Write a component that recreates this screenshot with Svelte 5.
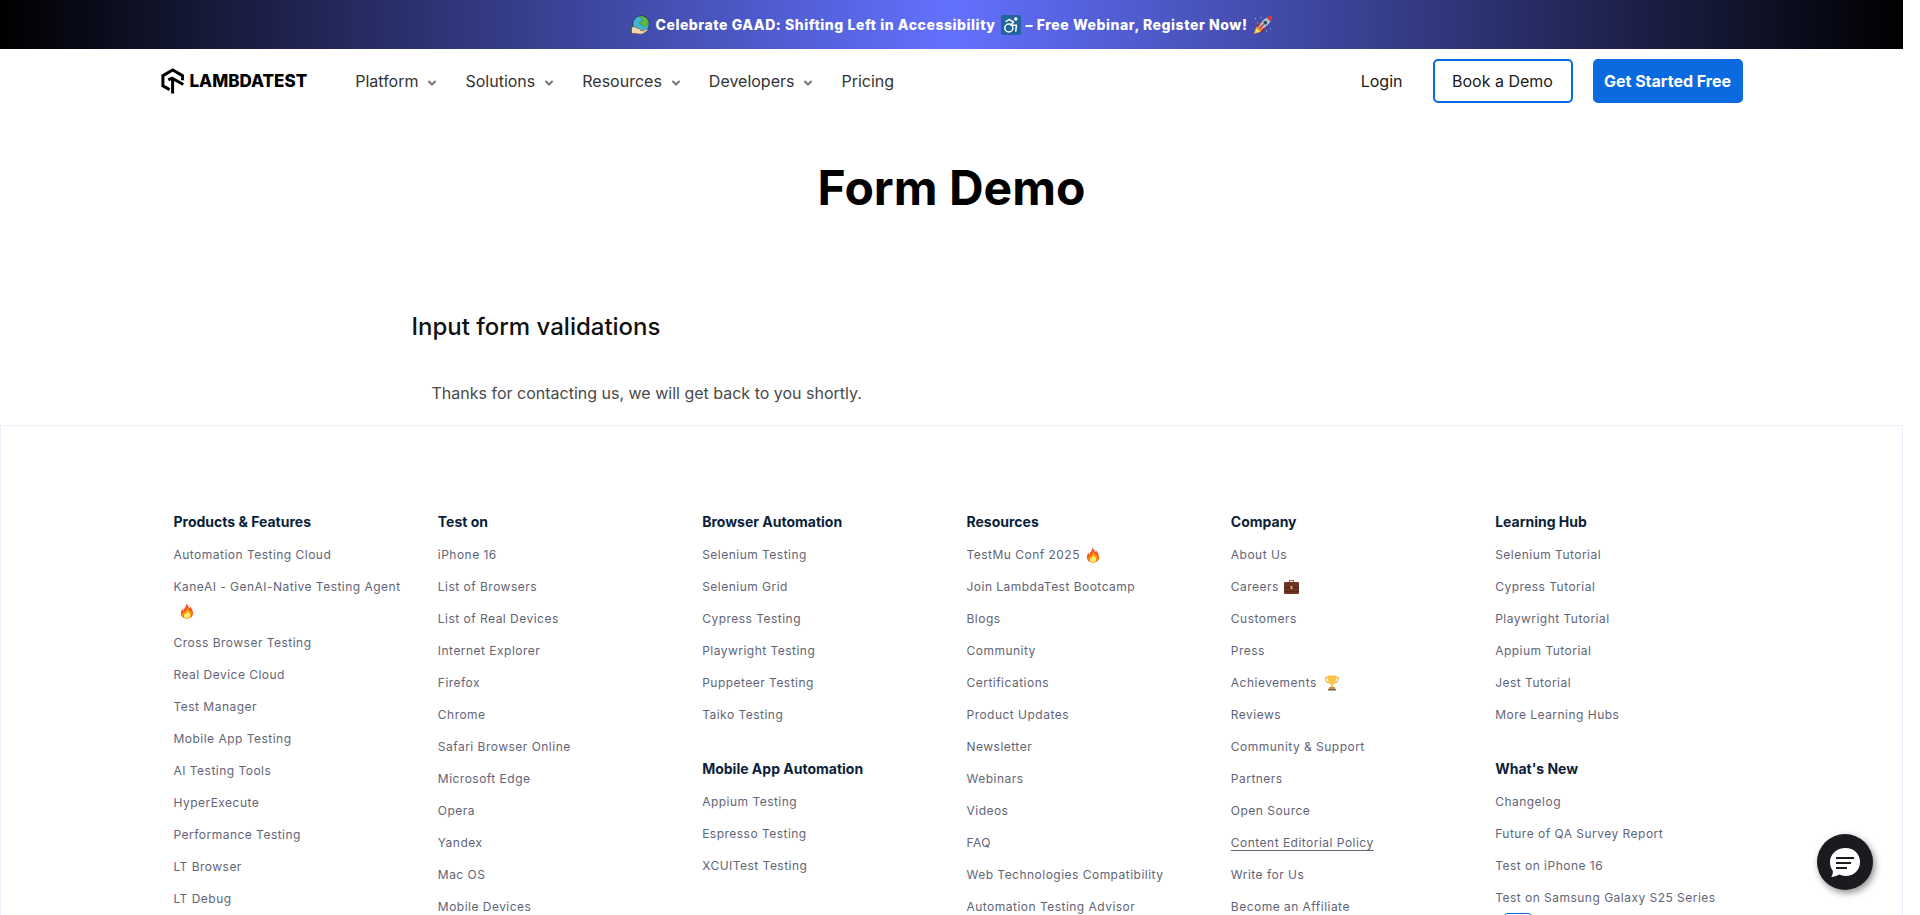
<script>
  const menu = [
    { label: 'Platform', drop: true },
    { label: 'Solutions', drop: true },
    { label: 'Resources', drop: true },
    { label: 'Developers', drop: true },
    { label: 'Pricing', drop: false }
  ];

  const link = (text, extra = {}) => ({ text, ...extra });

  const columns = [
    [
      {
        title: 'Products & Features',
        links: [
          link('Automation Testing Cloud'),
          link('KaneAI - GenAI-Native Testing Agent', { icon: 'fire' }),
          link('Cross Browser Testing'),
          link('Real Device Cloud'),
          link('Test Manager'),
          link('Mobile App Testing'),
          link('AI Testing Tools'),
          link('HyperExecute'),
          link('Performance Testing'),
          link('LT Browser'),
          link('LT Debug')
        ]
      }
    ],
    [
      {
        title: 'Test on',
        links: [
          link('iPhone 16'),
          link('List of Browsers'),
          link('List of Real Devices'),
          link('Internet Explorer'),
          link('Firefox'),
          link('Chrome'),
          link('Safari Browser Online'),
          link('Microsoft Edge'),
          link('Opera'),
          link('Yandex'),
          link('Mac OS'),
          link('Mobile Devices')
        ]
      }
    ],
    [
      {
        title: 'Browser Automation',
        links: [
          link('Selenium Testing'),
          link('Selenium Grid'),
          link('Cypress Testing'),
          link('Playwright Testing'),
          link('Puppeteer Testing'),
          link('Taiko Testing')
        ]
      },
      {
        title: 'Mobile App Automation',
        links: [link('Appium Testing'), link('Espresso Testing'), link('XCUITest Testing')]
      }
    ],
    [
      {
        title: 'Resources',
        links: [
          link('TestMu Conf 2025', { icon: 'fire' }),
          link('Join LambdaTest Bootcamp'),
          link('Blogs'),
          link('Community'),
          link('Certifications'),
          link('Product Updates'),
          link('Newsletter'),
          link('Webinars'),
          link('Videos'),
          link('FAQ'),
          link('Web Technologies Compatibility'),
          link('Automation Testing Advisor')
        ]
      }
    ],
    [
      {
        title: 'Company',
        links: [
          link('About Us'),
          link('Careers', { icon: 'case' }),
          link('Customers'),
          link('Press'),
          link('Achievements', { icon: 'trophy' }),
          link('Reviews'),
          link('Community & Support'),
          link('Partners'),
          link('Open Source'),
          link('Content Editorial Policy', { underline: true }),
          link('Write for Us'),
          link('Become an Affiliate')
        ]
      }
    ],
    [
      {
        title: 'Learning Hub',
        links: [
          link('Selenium Tutorial'),
          link('Cypress Tutorial'),
          link('Playwright Tutorial'),
          link('Appium Tutorial'),
          link('Jest Tutorial'),
          link('More Learning Hubs')
        ]
      },
      {
        title: "What's New",
        links: [
          link('Changelog'),
          link('Future of QA Survey Report'),
          link('Test on iPhone 16'),
          link('Test on Samsung Galaxy S25 Series', { badge: true })
        ]
      }
    ]
  ];
</script>

<div class="page">
  <a class="banner" href="#webinar">
    <svg width="20" height="20" viewBox="0 0 20 20" aria-hidden="true">
      <circle cx="11" cy="9" r="8.3" fill="#3fb6cf" stroke="#1d3345" stroke-width="0.8" />
      <path d="M9 1.2c3 1 1 3 3.4 3.2 1.400 0.200 0.500 2.400-1 2.600-2 0.300-3.400 1.600-1 2 2.500 0.300 2.600 2.600 4 2.700 1.600 0.100 3-1.700 4-4.700C17.800 3.200 13.500 0.300 9 1.200Z" fill="#62bf35" stroke="#2b5d33" stroke-width="0.4" />
      <path d="M1 12.500c2.500-1.400 4.700-0.500 6.500 1l3 0.300c1.400 0.300 1 1.500-0.300 1.700l3.300 0.300 3.200-1.800c1.200-0.300 1.600 0.700 0.800 1.400l-4.300 3.300c-2 0.700-4.500 0.500-7-0.200H1Z" fill="#f6d3ac" stroke="#4a3a34" stroke-width="0.5" />
      <path d="M0 12h1.800v7H0z" fill="#245d70" />
    </svg>
    <span>Celebrate GAAD: Shifting Left in Accessibility</span>
    <svg width="20" height="20" viewBox="0 0 20 20" aria-hidden="true">
      <rect width="20" height="20" rx="2" fill="#20659c" />
      <circle cx="14.800" cy="4" r="1.700" fill="#fff" />
      <g fill="none" stroke="#fff" stroke-width="1.500" stroke-linecap="round" stroke-linejoin="round">
        <path d="M5 6.500l3-2 4.500 2.300-2.500 3.400h5.500l-0.800 6" />
        <circle cx="7.800" cy="13" r="4" />
      </g>
    </svg>
    <span>– Free Webinar, Register Now!</span>
    <svg width="20" height="20" viewBox="0 0 20 20" aria-hidden="true">
      <path d="M2 3.500h1M8 2v1M13 16h1M17 14h1M4 8h1" stroke="#b8c7ff" stroke-width="1" />
      <path d="M3.500 10.500l4-3.700 4 1-4.500 5ZM9.500 16.500l3.700-4-1-4-5 4.500Z" fill="#c4262e" />
      <path d="M5.500 12C8 7 11.500 3 16 1.700l2.300 2.300C17 8.500 13 12 8 14.500Z" fill="#a9c7d6" />
      <path d="M13.500 3C15.500 1.500 17.500 1 19.200 0.800 19 2.500 18.500 4.500 17 6.500Z" fill="#e2382f" />
      <circle cx="12.300" cy="7.700" r="1.900" fill="#2f4d63" />
      <path d="M1 19l2-6.500 2.500-1 3 3-1 2.500Z" fill="#f59b2d" />
      <path d="M1.800 18l1.700-4.500 3 3Z" fill="#ffe45c" />
      <path d="M6.500 13.500l4-4" stroke="#c4262e" stroke-width="1.500" />
    </svg>
  </a>

  <header class="bar">
    <a class="logo" href="#home">
      <svg width="24" height="26" viewBox="0 0 24 26" aria-hidden="true">
        <g fill="none" stroke="#000" stroke-width="3">
          <path d="M8.600 21.600L1.900 17.800V7.700L11.700 2l9.800 5.700v4.500" />
          <path d="M7.300 11.900l3.700-1.700 11.300 6.300" />
          <path d="M11.600 12v13.500" />
        </g>
      </svg>
      <span>LAMBDATEST</span>
    </a>
    <nav>
      {#each menu as item}
        <a href="#{item.label.toLowerCase()}">
          {item.label}
          {#if item.drop}
            <svg width="8" height="8" viewBox="0 0 8 8" aria-hidden="true">
              <path d="M1 2.500l3 3 3-3" fill="none" stroke="#777" stroke-width="2" stroke-linecap="round" />
            </svg>
          {/if}
        </a>
      {/each}
    </nav>
    <div class="actions">
      <a class="login" href="#login">Login</a>
      <button class="demo" type="button">Book a Demo</button>
      <button class="start" type="button">Get Started Free</button>
    </div>
  </header>

  <main>
    <h1>Form Demo</h1>
    <section>
      <h2>Input form validations</h2>
      <p>Thanks for contacting us, we will get back to you shortly.</p>
    </section>
  </main>

  <footer>
    <div class="columns">
      {#each columns as groups}
        <div class="column">
          {#each groups as group}
            <div class="group">
              <h3>{group.title}</h3>
              <ul>
                {#each group.links as item}
                  <li>
                    <a href="#footer" class:underline={item.underline}>{item.text}</a><wbr />{#if item.icon === 'fire'}
                      <svg class="fire" width="12" height="16" viewBox="0 0 12 16" aria-hidden="true">
                        <path d="M5.200 0.500c1.800 1.500 2.500 3 2.600 5 0.700-0.600 1-1.200 1.100-2C10.800 5.500 12 8 12 10.300 12 13.500 9.500 15.700 6 15.700S0 13.500 0 10.300C0 8.700 0.500 7 1.600 5.800c0.100 1 0.300 1.600 0.900 2C2.800 5 5.800 4 5.200 0.500Z" fill="#f4511e" />
                        <path d="M6.800 4.500c0.300 2 2 2.600 2.200 4 0.500-0.300 0.700-0.800 0.800-1.500 2.300 4.600 0.300 8.500-3.800 8.500-4 0-5.600-3.500-4-6.800 0.300 1 0.600 1.300 1.100 1.400C3.200 7.800 6 7.500 6.800 4.500Z" fill="#ff9800" />
                        <path d="M6.200 8c1.800 1.600 3.300 3 2.900 5-0.300 1.500-1.500 2.400-3.100 2.400S3.200 14.500 3 13.200c-0.200-1.400 0.400-2.400 1-3 0.100 0.700 0.400 1 0.800 1.100C4.900 10 5.900 9.500 6.200 8Z" fill="#ffee76" />
                      </svg>
                    {:else if item.icon === 'case'}
                      <svg class="case" width="15" height="16" viewBox="0 0 15 16" aria-hidden="true">
                        <path d="M5.500 3.500V1.500h4v2" fill="none" stroke="#9a6a4e" stroke-width="1.200" />
                        <rect y="3" width="15" height="12" rx="1" fill="#6d3524" />
                        <path d="M0 8.500h15" stroke="#45211a" stroke-width="1" />
                        <path d="M0 12.500h15" stroke="#542719" stroke-width="1" />
                        <rect x="6.500" y="7" width="2" height="3" fill="#e0b45c" />
                      </svg>
                    {:else if item.icon === 'trophy'}
                      <svg class="trophy" width="14" height="16" viewBox="0 0 14 16" aria-hidden="true">
                        <path d="M3 2.500H0.800c0 3 1 5 3.500 5.500M11 2.500h2.200c0 3-1 5-3.500 5.500" fill="none" stroke="#e9b04b" stroke-width="1.200" />
                        <path d="M2.500 0.500h9c0 5-1.200 8-3.500 9.300V12H6V9.800C3.700 8.500 2.500 5.500 2.500 0.500Z" fill="#fcc444" />
                        <path d="M4.500 12h5l1 2h-7Z" fill="#c98f35" />
                        <path d="M3 14h8v1.600H3Z" fill="#7c6a5a" />
                      </svg>
                    {/if}{#if item.badge}<span class="badge"></span>{/if}
                  </li>
                {/each}
              </ul>
            </div>
          {/each}
        </div>
      {/each}
    </div>
  </footer>

  <button class="chat" type="button" aria-label="Open chat">
    <svg width="32" height="32" viewBox="0 0 32 32" aria-hidden="true">
      <path d="M16.500 2C25 2 31 8 31 16s-6 14-14.500 14c-2.200 0-4.300-0.500-6.200-1.400C7.500 30.300 4.500 31 2.200 31c1.200-1.800 1.900-4 1.700-6C2 22.500 1 19.500 1 16 1 8 8 2 16.500 2Z" fill="#fff" />
      <path d="M7 12h18M7 17h15M7 22h11" stroke="#1a1b1f" stroke-width="2" />
    </svg>
  </button>
</div>

<style>
  :global(body) {
    margin: 0;
    background: #fff;
  }

  .page {
    box-sizing: border-box;
    height: 100vh;
    padding-right: 17px;
    overflow-y: auto;
    scrollbar-width: none;
    font-family: Inter, 'Liberation Sans', sans-serif;
    font-size: 16px;
    line-height: 24px;
    color: #333;
  }

  a {
    color: inherit;
    text-decoration: none;
  }

  svg {
    flex: none;
  }

  .banner {
    display: flex;
    align-items: center;
    justify-content: center;
    gap: 5px;
    height: 49px;
    background: linear-gradient(90deg, #000, #6371ff 50%, #000);
    color: #fff;
    font-size: 14px;
    font-weight: 800;
    letter-spacing: 0.04em;
  }

  .bar {
    display: flex;
    align-items: center;
    box-sizing: border-box;
    max-width: 1582px;
    height: 64px;
    margin: 0 auto;
  }

  .logo {
    display: flex;
    align-items: center;
    gap: 5px;
    color: #000;
    font-size: 17px;
    font-weight: 800;
  }

  nav {
    display: flex;
    gap: 29px;
    margin-left: 48px;
  }

  nav a {
    display: flex;
    align-items: center;
    gap: 10px;
  }

  nav svg {
    margin-top: 4px;
  }

  .actions {
    display: flex;
    align-items: center;
    gap: 20px;
    margin-left: auto;
    color: #1a1a1a;
  }

  .login {
    margin-right: 10px;
  }

  button {
    font: inherit;
    cursor: pointer;
  }

  .demo,
  .start {
    box-sizing: border-box;
    height: 44px;
    padding: 0;
    border: 2px solid #0a6adf;
    border-radius: 5px;
  }

  .demo {
    width: 140px;
    background: #fff;
    color: #1a1a1a;
  }

  .start {
    width: 150px;
    background: #0a6adf;
    color: #fff;
    font-weight: 700;
  }

  main {
    padding: 47px 0 20px;
  }

  h1,
  h2,
  h3,
  p,
  ul {
    margin: 0;
    padding: 0;
  }

  h1 {
    color: #000;
    font-size: 48px;
    line-height: 56px;
    font-weight: 700;
    text-align: center;
  }

  section {
    max-width: 1080px;
    margin: 95px auto 0;
  }

  h2 {
    color: #111;
    font-size: 24px;
    line-height: 32px;
    font-weight: 500;
  }

  p {
    margin-top: 38px;
    padding-left: 20px;
    color: #4a4a4a;
  }

  footer {
    border: 1px solid #ebeffc;
    padding: 84px 0 40px;
  }

  .columns {
    display: grid;
    grid-template-columns: repeat(6, 1fr);
    max-width: 1586px;
    margin: 0 auto;
  }

  .column {
    display: flex;
    flex-direction: column;
    gap: 30px;
    padding: 0 15px;
  }

  h3 {
    color: #0b1f3a;
    font-size: 14px;
    line-height: 24px;
    font-weight: 700;
  }

  ul {
    display: flex;
    flex-direction: column;
    gap: 8px;
    margin-top: 9px;
    list-style: none;
    color: #5f6577;
    font-size: 12px;
    letter-spacing: 0.04em;
  }

  li svg {
    vertical-align: -4px;
  }

  .fire {
    margin-left: 7px;
  }

  .case {
    margin-left: 5px;
  }

  .trophy {
    margin-left: 8px;
  }

  .underline {
    text-decoration: underline;
    text-underline-offset: 3px;
  }

  .badge {
    display: inline-block;
    box-sizing: border-box;
    width: 30px;
    height: 16px;
    margin-left: 8px;
    border: 1px solid #0a6adf;
    border-radius: 5px;
    vertical-align: -3px;
  }

  .chat {
    position: fixed;
    right: 47px;
    bottom: 25px;
    display: grid;
    place-items: center;
    width: 56px;
    height: 56px;
    padding: 0;
    border: 0;
    border-radius: 50%;
    background: #1a1b1f;
    box-shadow: 2px 3px 7px rgba(0, 0, 0, 0.45);
  }
</style>
